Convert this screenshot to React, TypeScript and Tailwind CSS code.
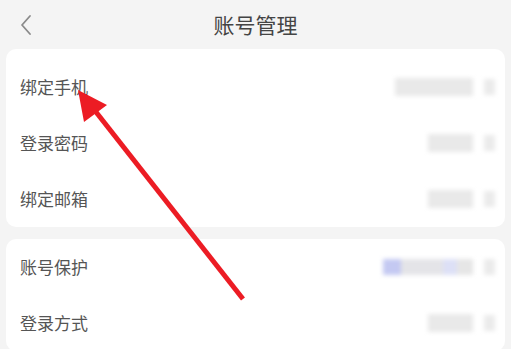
import React from 'react';

const font = { fontFamily: '"Noto Sans CJK SC", "Noto Sans", sans-serif' };

type Row = { label: string; value: string; tint?: boolean };

const groupA: Row[] = [
  { label: '绑定手机', value: 'w-[78px]' },
  { label: '登录密码', value: 'w-[45px]' },
  { label: '绑定邮箱', value: 'w-[45px]' },
];

const groupB: Row[] = [
  { label: '账号保护', value: 'w-[90px]', tint: true },
  { label: '登录方式', value: 'w-[45px]' },
];

const Item: React.FC<{ row: Row }> = ({ row }) => (
  <div className="flex h-[56px] items-center justify-between pl-[14px] pr-[10px]">
    <span className="text-[17px] text-[#555555]">{row.label}</span>
    <div className="flex items-center gap-[11px]">
      {row.tint ? (
        <div className="flex h-[16px] w-[90px] blur-[2px]">
          <div className="w-[18px] bg-[#c4c9f2]" />
          <div className="flex-1 bg-[#e4e4e8]" />
          <div className="w-[14px] bg-[#dde0f6]" />
          <div className="w-[16px] bg-[#e6e6e6]" />
        </div>
      ) : (
        <div className={`h-[18px] ${row.value} bg-[#e9e9e9] blur-[2px]`} />
      )}
      <div className="h-[16px] w-[11px] bg-[#ebebeb] blur-[2px]" />
    </div>
  </div>
);

const App: React.FC = () => {
  return (
    <div className="relative h-[349px] w-[511px] overflow-hidden bg-[#f4f4f4]" style={font}>
      {/* Header */}
      <div className="relative flex h-[49px] items-center justify-center">
        <svg className="absolute left-[18px] top-[14px] h-[22px] w-[16px]" viewBox="0 0 16 22" fill="none">
          <path d="M12 2L4 11l8 9" stroke="#8a8a8a" strokeWidth="1.8" strokeLinecap="round" strokeLinejoin="round" />
        </svg>
        <h1 className="text-[21px] text-[#444444]">账号管理</h1>
      </div>

      <div className="flex flex-col gap-[12px] px-[6px]">
        <div className="rounded-[10px] bg-white pt-[10px]">
          {groupA.map((r) => (
            <Item key={r.label} row={r} />
          ))}
        </div>
        <div className="rounded-[10px] bg-white">
          {groupB.map((r) => (
            <Item key={r.label} row={r} />
          ))}
        </div>
      </div>

      {/* Red arrow annotation */}
      <svg className="pointer-events-none absolute left-0 top-0" width="511" height="349" viewBox="0 0 511 349">
        <line x1="243" y1="299" x2="96" y2="112" stroke="#ec1c24" strokeWidth="5" />
        <polygon points="78,90 84,122 107,105" fill="#ec1c24" />
      </svg>
    </div>
  );
};

export default App;
